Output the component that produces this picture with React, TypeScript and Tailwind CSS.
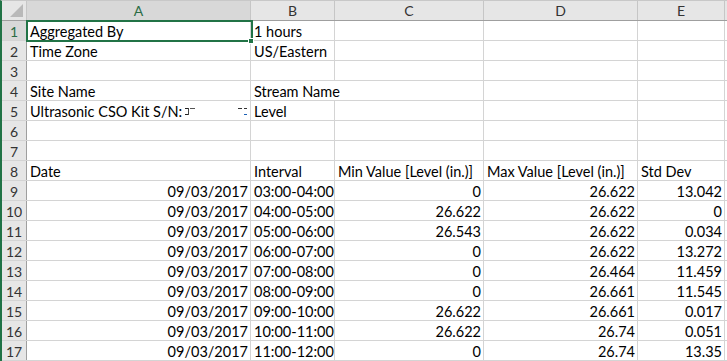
import React from "react";

type Cell = { v?: string; right?: boolean; overflow?: boolean };

const cols = ["A", "B", "C", "D", "E"];
const widths = ["w-[224px]", "w-[84px]", "w-[149px]", "w-[154px]", "w-[87px]"];

const dataRows: string[][] = [
  ["03:00-04:00", "0", "26.622", "13.042"],
  ["04:00-05:00", "26.622", "26.622", "0"],
  ["05:00-06:00", "26.543", "26.622", "0.034"],
  ["06:00-07:00", "0", "26.622", "13.272"],
  ["07:00-08:00", "0", "26.464", "11.459"],
  ["08:00-09:00", "0", "26.661", "11.545"],
  ["09:00-10:00", "26.622", "26.661", "0.017"],
  ["10:00-11:00", "26.622", "26.74", "0.051"],
  ["11:00-12:00", "0", "26.74", "13.35"],
];

const rows: Cell[][] = [
  [{ v: "Aggregated By" }, { v: "1 hours" }, {}, {}, {}],
  [{ v: "Time Zone" }, { v: "US/Eastern" }, {}, {}, {}],
  [{}, {}, {}, {}, {}],
  [{ v: "Site Name" }, { v: "Stream Name", overflow: true }, {}, {}, {}],
  [{ v: "SN" }, { v: "Level" }, {}, {}, {}],
  [{}, {}, {}, {}, {}],
  [{}, {}, {}, {}, {}],
  [
    { v: "Date" },
    { v: "Interval" },
    { v: "Min Value [Level (in.)]" },
    { v: "Max Value [Level (in.)]" },
    { v: "Std Dev" },
  ],
  ...dataRows.map((r) => [
    { v: "09/03/2017", right: true },
    { v: r[0] },
    { v: r[1], right: true },
    { v: r[2], right: true },
    { v: r[3], right: true },
  ]),
];

// redacted serial number, only a few stray pixels remain
function SerialCell() {
  return (
    <span className="flex items-end">
      Ultrasonic CSO Kit S/N:
      <span className="mb-[4px] ml-[3px] flex h-[8px] w-[62px] items-start">
        <span className="flex h-[7px] w-[4px] flex-col justify-between border-r border-[#444]">
          <span className="h-[1px] w-[3px] bg-[#222]" />
          <span className="h-[1px] w-[3px] bg-[#222]" />
        </span>
        <span className="ml-[1px] h-[1px] w-[5px] bg-[#555]" />
        <span className="ml-auto h-[1px] w-[4px] bg-[#333]" />
        <span className="ml-[2px] flex h-[7px] w-[3px] flex-col justify-between">
          <span className="h-[1px] w-[3px] bg-[#333]" />
          <span className="h-[1px] w-[3px] bg-[#1a5fb4]" />
        </span>
      </span>
    </span>
  );
}

export default function App() {
  return (
    <div
      className="relative h-[361px] w-[727px] overflow-hidden border-l-2 border-l-[#217346] border-t border-t-[#c8c8c8] bg-white text-[14.5px] text-black"
      style={{ fontFamily: "Lato, 'Noto Sans', sans-serif" }}
    >
      <div className="flex h-[20px] border-b border-[#9f9f9f] bg-[#e6e6e6]">
        <div className="flex w-[25px] items-end justify-end border-r border-[#c6c6c6] pb-[3px] pr-[3px]">
          <svg width="13" height="13" viewBox="0 0 13 13">
            <polygon points="13,0 13,13 0,13" fill="#b9b9b9" />
          </svg>
        </div>
        {cols.map((c, i) => (
          <div
            key={c}
            className={`${widths[i]} flex items-center justify-center border-r border-[#c6c6c6] text-[14px] ${
              i === 0 ? "bg-[#d8d8d8] text-[#2b6b45]" : "text-[#333]"
            }`}
          >
            {c}
          </div>
        ))}
      </div>

      {rows.map((row, ri) => (
        <div key={ri} className="flex h-[20px] border-b border-[#d4d4d4]">
          <div
            className={`flex w-[25px] items-end justify-center border-r border-[#9f9f9f] text-[14px] leading-[16px] ${
              ri === 0 ? "bg-[#d8d8d8] text-[#2b6b45]" : "bg-[#e6e6e6] text-[#333]"
            }`}
          >
            {ri + 1}
          </div>
          {row.map((cell, ci) => (
            <div
              key={ci}
              className={`${widths[ci]} flex items-end whitespace-nowrap leading-[16px] ${
                cell.overflow ? "overflow-visible" : "border-r border-[#d4d4d4]"
              } ${cell.right ? "justify-end pr-[2px]" : "pl-[3px]"}`}
            >
              {cell.v === "SN" ? <SerialCell /> : cell.v}
            </div>
          ))}
        </div>
      ))}

      {/* active cell selection over A1 */}
      <div className="pointer-events-none absolute left-[24px] top-[19px] h-[22px] w-[227px] border-2 border-[#217346]" />
      <div className="pointer-events-none absolute left-[246px] top-[37px] h-[6px] w-[6px] border border-white bg-[#217346]" />
    </div>
  );
}
